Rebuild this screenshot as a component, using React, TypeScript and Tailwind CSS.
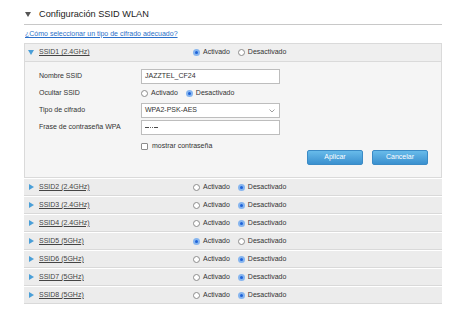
import React from "react";

function Radio({ checked }: { checked?: boolean }) {
  if (checked) {
    return (
      <span className="flex h-[7px] w-[7px] items-center justify-center rounded-full bg-[#86b5ef]">
        <span className="h-[3px] w-[3px] rounded-full bg-[#1f63d8]" />
      </span>
    );
  }
  return <span className="h-[7px] w-[7px] rounded-full border border-[#8c8c8c] bg-white" />;
}

function Toggle({ on }: { on: boolean }) {
  return (
    <div className="flex items-center">
      <Radio checked={on} />
      <span className="ml-[3px]">Activado</span>
      <span className="ml-[8px]" />
      <Radio checked={!on} />
      <span className="ml-[3px]">Desactivado</span>
    </div>
  );
}

function FormRow({ label, children }: { label: string; children: React.ReactNode }) {
  return (
    <div className="flex h-[17px] items-center">
      <div className="w-[116px] pl-[14px]">{label}</div>
      {children}
    </div>
  );
}

const rows = [
  { name: "SSID2 (2.4GHz)", on: false },
  { name: "SSID3 (2.4GHz)", on: false },
  { name: "SSID4 (2.4GHz)", on: false },
  { name: "SSID5 (5GHz)", on: true },
  { name: "SSID6 (5GHz)", on: false },
  { name: "SSID7 (5GHz)", on: false },
  { name: "SSID8 (5GHz)", on: false },
];

export default function App() {
  return (
    <div className="h-[318px] w-[450px] overflow-hidden bg-white pl-[24px] pr-[8px] pt-[6px] font-['Liberation_Sans',Arial,sans-serif] text-[7px] text-[#333]">
      <div className="flex h-[19px] items-center border-b border-[#c8c8c8] pb-[1px]">
        <span className="ml-[1px] h-0 w-0 border-x-[3px] border-t-[5px] border-x-transparent border-t-[#555]" />
        <span className="ml-[8px] text-[9.2px] text-[#222]">Configuración SSID WLAN</span>
      </div>

      <div className="flex h-[18px] items-center">
        <a className="ml-[1px] text-[#2a6fc9] underline">¿Cómo seleccionar un tipo de cifrado adecuado?</a>
      </div>

      <div className="border border-[#dadada] bg-[#f5f5f5]">
        <div className="flex h-[18px] items-center border-b border-[#dadada] bg-[#efefef]">
          <div className="w-[14px] pl-[3px]">
            <span className="block h-0 w-0 border-x-[3px] border-t-[5px] border-x-transparent border-t-[#4a9fd8]" />
          </div>
          <span className="w-[154px] text-[#444] underline">SSID1 (2.4GHz)</span>
          <Toggle on={true} />
        </div>

        <div className="pt-[6px]">
          <FormRow label="Nombre SSID">
            <div className="flex h-[15px] w-[139px] items-center border border-[#bdbdbd] bg-white pl-[3px]">JAZZTEL_CF24</div>
          </FormRow>
          <FormRow label="Ocultar SSID">
            <div className="flex items-center">
              <Radio />
              <span className="ml-[3px]">Activado</span>
              <span className="ml-[8px]" />
              <Radio checked />
              <span className="ml-[3px]">Desactivado</span>
            </div>
          </FormRow>
          <FormRow label="Tipo de cifrado">
            <div className="flex h-[15px] w-[139px] items-center justify-between border border-[#bdbdbd] bg-white pl-[3px] pr-[4px]">
              <span>WPA2-PSK-AES</span>
              <svg width="6" height="4" viewBox="0 0 6 4">
                <polyline points="0.5,0.5 3,3 5.5,0.5" fill="none" stroke="#888" strokeWidth="0.8" />
              </svg>
            </div>
          </FormRow>
          <FormRow label="Frase de contraseña WPA">
            <div className="flex h-[15px] w-[139px] items-center gap-[0.8px] border border-[#bdbdbd] bg-white pl-[3px]">
              {[0, 1, 2, 3, 4, 5].map((i) => (
                <span key={i} className="h-[1.5px] w-[1.5px] rounded-full bg-[#333]" />
              ))}
            </div>
          </FormRow>

          <div className="mt-[2px] flex pb-[12px]">
            <div className="flex h-[16px] items-center pl-[116px]">
              <span className="h-[7px] w-[7px] rounded-[1px] border border-[#8c8c8c] bg-white" />
              <span className="ml-[4px]">mostrar contraseña</span>
            </div>
            <div className="ml-auto mr-[13px] mt-[12px] flex gap-[9px]">
              <button className="h-[15px] w-[56px] rounded-[2px] border border-[#3b8bc6] bg-linear-to-b from-[#68bbea] to-[#3a90cf] text-[7px] text-white">
                Aplicar
              </button>
              <button className="h-[15px] w-[56px] rounded-[2px] border border-[#3b8bc6] bg-linear-to-b from-[#68bbea] to-[#3a90cf] text-[7px] text-white">
                Cancelar
              </button>
            </div>
          </div>
        </div>
      </div>

      <div className="mt-[1px] flex flex-col gap-[1px]">
        {rows.map((r) => (
          <div key={r.name} className="flex h-[17px] items-center border-b border-[#d9d9d9] bg-[#ececec] pl-[1px]">
            <div className="w-[14px] pl-[4px]">
              <span className="block h-0 w-0 border-y-[3px] border-l-[5px] border-y-transparent border-l-[#4a9fd8]" />
            </div>
            <span className="w-[154px] text-[#444] underline">{r.name}</span>
            <Toggle on={r.on} />
          </div>
        ))}
      </div>
    </div>
  );
}
